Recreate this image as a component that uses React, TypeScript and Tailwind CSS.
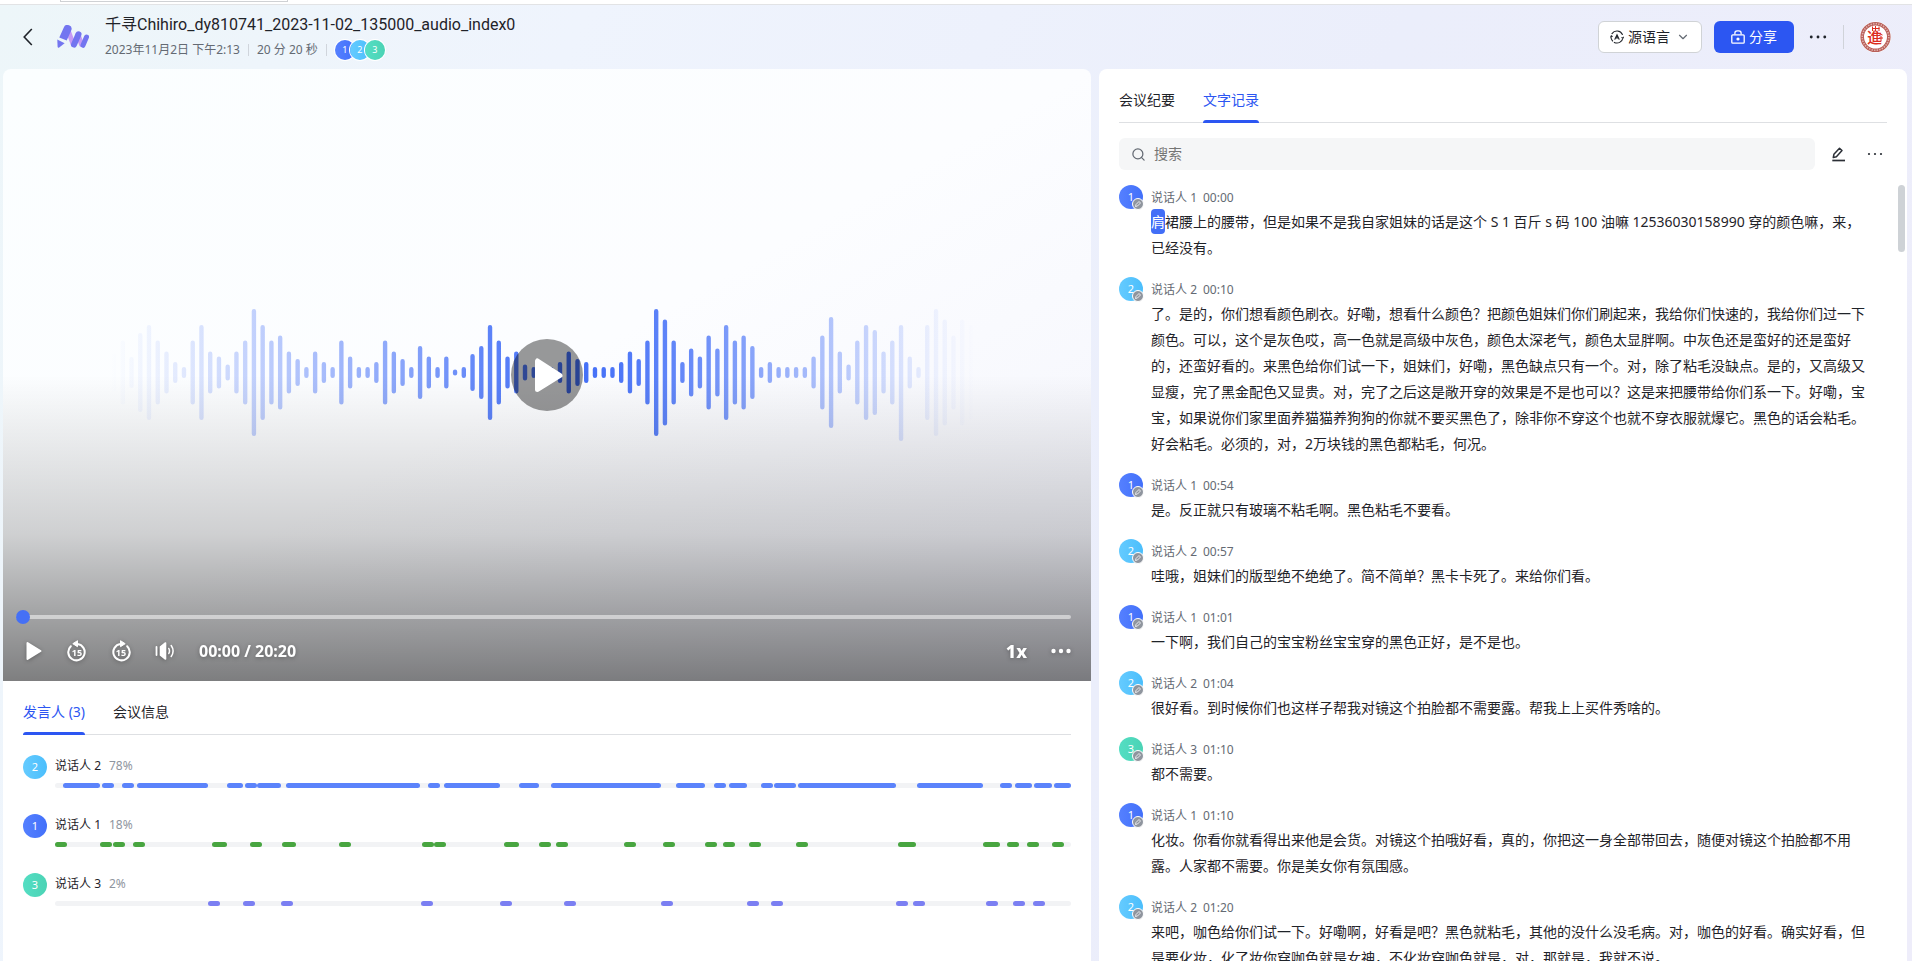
import React, { useState } from "react";
import { ChevronDown, Search } from "lucide-react";
import { clsx } from "clsx";

type SpeakerId = 1 | 2 | 3;

interface Entry {
  speaker: SpeakerId;
  time: string;
  text: string;
}

interface Speaker {
  id: SpeakerId;
  share: string;
  bar: string;
  segments: number[][];
}

const AVATAR: Record<SpeakerId, string> = {
  1: "bg-linear-to-r from-[#5580ff] to-[#4270fa]",
  2: "bg-linear-to-r from-[#65cbff] to-[#4abefc]",
  3: "bg-linear-to-r from-[#54dec3] to-[#4bd3b5]",
};

const ENTRIES: Entry[] = [
  { speaker: 1, time: "00:00", text: "肩裙腰上的腰带，但是如果不是我自家姐妹的话是这个 S 1 百斤 s 码 100 油嘛 12536030158990 穿的颜色嘛，来，已经没有。" },
  { speaker: 2, time: "00:10", text: "了。是的，你们想看颜色刷衣。好嘞，想看什么颜色？把颜色姐妹们你们刷起来，我给你们快速的，我给你们过一下颜色。可以，这个是灰色哎，高一色就是高级中灰色，颜色太深老气，颜色太显胖啊。中灰色还是蛮好的还是蛮好的，还蛮好看的。来黑色给你们试一下，姐妹们，好嘞，黑色缺点只有一个。对，除了粘毛没缺点。是的，又高级又显瘦，完了黑金配色又显贵。对，完了之后这是敞开穿的效果是不是也可以？这是来把腰带给你们系一下。好嘞，宝宝，如果说你们家里面养猫猫养狗狗的你就不要买黑色了，除非你不穿这个也就不穿衣服就爆它。黑色的话会粘毛。好会粘毛。必须的，对，2万块钱的黑色都粘毛，何况。" },
  { speaker: 1, time: "00:54", text: "是。反正就只有玻璃不粘毛啊。黑色粘毛不要看。" },
  { speaker: 2, time: "00:57", text: "哇哦，姐妹们的版型绝不绝绝了。简不简单？黑卡卡死了。来给你们看。" },
  { speaker: 1, time: "01:01", text: "一下啊，我们自己的宝宝粉丝宝宝穿的黑色正好，是不是也。" },
  { speaker: 2, time: "01:04", text: "很好看。到时候你们也这样子帮我对镜这个拍脸都不需要露。帮我上上买件秀啥的。" },
  { speaker: 3, time: "01:10", text: "都不需要。" },
  { speaker: 1, time: "01:10", text: "化妆。你看你就看得出来他是会货。对镜这个拍哦好看，真的，你把这一身全部带回去，随便对镜这个拍脸都不用露。人家都不需要。你是美女你有氛围感。" },
  { speaker: 2, time: "01:20", text: "来吧，咖色给你们试一下。好嘞啊，好看是吧？黑色就粘毛，其他的没什么没毛病。对，咖色的好看。确实好看，但是要化妆，化了妆你穿咖色就是女神，不化妆穿咖色就是，对，那就是，我就不说。" },
];

// segment positions are in units of 1/1016 of the timeline
const TIMELINE = 1016;

const SPEAKERS: Speaker[] = [
  {
    id: 2,
    share: "78%",
    bar: "bg-[#5b83fb]",
    segments: [[8, 45], [47, 59], [67, 79], [82, 153], [172, 188], [190, 202], [202, 226], [231, 365], [373, 385], [389, 445], [464, 484], [496, 606], [621, 650], [659, 671], [674, 692], [706, 718], [719, 741], [743, 841], [862, 928], [945, 957], [960, 977], [979, 997], [999, 1016]],
  },
  {
    id: 1,
    share: "18%",
    bar: "bg-[#48a540]",
    segments: [[0, 12], [45, 57], [58, 70], [78, 90], [157, 172], [195, 207], [227, 241], [284, 296], [367, 379], [379, 391], [449, 464], [484, 496], [501, 513], [569, 581], [608, 620], [650, 662], [668, 680], [694, 706], [741, 753], [843, 861], [928, 945], [952, 964], [972, 984], [997, 1009]],
  },
  {
    id: 3,
    share: "2%",
    bar: "bg-[#7b7ff2]",
    segments: [[153, 165], [188, 200], [226, 238], [366, 378], [445, 457], [509, 521], [606, 618], [692, 704], [716, 728], [841, 853], [858, 870], [931, 943], [958, 970], [978, 990]],
  },
];

const WAVE = [
  38, 64, 31, 79, 95, 64, 42, 21, 11, 64, 95, 42, 32, 16, 42, 64, 127, 95, 64, 74, 42, 27, 11, 42, 21,
  11, 64, 32, 11, 11, 21, 64, 42, 27, 11, 53, 32, 11, 32, 6, 11, 37, 53, 95, 64, 32, 42, 16, 11, 6,
  11, 21, 42, 27, 21, 11, 11, 11, 21, 42, 27, 64, 127, 106, 64, 21, 48, 32, 74, 48, 95, 64, 74, 53, 11,
  21, 11, 11, 11, 11, 32, 74, 111, 42, 16, 64, 95, 85, 42, 64, 116, 32, 11, 95, 127, 106, 74, 106, 95,
];

// the 116 bar hangs lower than the rest
const WAVE_PATH = WAVE.map((h, i) => {
  const x = 111 + i * 8.745;
  const mid = h === 116 ? 314 : 303.5;
  const half = Math.max(h / 2 - 2.2, 0.2);
  return `M${x.toFixed(2)} ${mid - half}V${mid + half}`;
}).join("");

const WAVE_STOPS = [
  [0, 0], [0.05, 0.08], [0.1, 0.18], [0.17, 0.32], [0.27, 0.5], [0.35, 0.64], [0.44, 0.86], [0.53, 1],
  [0.58, 0.95], [0.66, 0.82], [0.73, 0.65], [0.79, 0.5], [0.85, 0.35], [0.91, 0.19], [0.95, 0.08], [1, 0],
];

function Waveform() {
  return (
    <svg viewBox="0 0 1088 612" className="absolute inset-0 w-full h-full" aria-hidden="true">
      <defs>
        <linearGradient id="wave" gradientUnits="userSpaceOnUse" x1="108" y1="0" x2="972" y2="0">
          {WAVE_STOPS.map(([offset, opacity]) => (
            <stop key={offset} offset={offset} stopColor="#426ef7" stopOpacity={opacity} />
          ))}
        </linearGradient>
      </defs>
      <path d={WAVE_PATH} stroke="url(#wave)" strokeWidth="4.4" strokeLinecap="round" fill="none" />
    </svg>
  );
}

function Dots({ className, r = 1.6 }: { className?: string; r?: number }) {
  return (
    <svg viewBox="0 0 20 20" className={className} fill="currentColor" aria-hidden="true">
      <circle cx="2.5" cy="10" r={r} />
      <circle cx="10" cy="10" r={r} />
      <circle cx="17.5" cy="10" r={r} />
    </svg>
  );
}

function Logo() {
  return (
    <svg viewBox="0 0 32 24" className="w-8 h-6 shrink-0" aria-hidden="true">
      <path d="M11 5L16 19M21 9.500L24.500 19.500" stroke="#c79bf5" strokeWidth="5" strokeLinecap="round" />
      <path d="M2.300 12.400L6.800 2.400A4 4 0 0 1 14.200 5.600L9.700 15.600Z" fill="#7375f0" />
      <path d="M.3 14.500L7.600 18.300L2.200 22.600Q.8 23.400.6 21.800Z" fill="#7375f0" />
      <path d="M21.500 9.300L17 19.600" stroke="#7375f0" strokeWidth="6" strokeLinecap="round" />
      <path d="M29.500 12L26 20.300" stroke="#7375f0" strokeWidth="5" strokeLinecap="round" />
    </svg>
  );
}

function LanguageIcon() {
  return (
    <svg viewBox="0 0 14 14" className="w-[14px] h-[14px]" fill="none" stroke="currentColor" strokeWidth="1.100" strokeLinecap="round" aria-hidden="true">
      <path d="M2 3.600A6 6 0 0 1 12.400 4.500M1 6.200a6 6 0 0 0 1.600 4.800M4.300 12.400A6 6 0 0 0 12.900 8M.7 6.900L1.300 5.800L2.200 6.500M13.400 7.200L12.800 8.300L11.900 7.600" />
      <path d="M4.900 9.300L7 4.700L9.100 9.300M5.700 7.900H8.300" />
    </svg>
  );
}

function ShareIcon() {
  return (
    <svg viewBox="0 0 14 14" className="w-[14px] h-[14px]" fill="none" stroke="currentColor" strokeWidth="1.300" aria-hidden="true">
      <rect x=".8" y="4.800" width="12.400" height="8.400" rx="1" />
      <path d="M3.900 4.600V3A2.200 2.200 0 0 1 6.100.8H7.900A2.200 2.200 0 0 1 10.100 3V4.600" />
      <circle cx="7" cy="9" r="1.600" fill="currentColor" stroke="none" />
    </svg>
  );
}

function Seal() {
  return (
    <svg viewBox="0 0 32 32" className="w-8 h-8" aria-hidden="true">
      <circle cx="15.500" cy="16" r="15.500" fill="#fff" />
      <circle cx="15.500" cy="16" r="13.300" fill="none" stroke="#b9605a" strokeWidth="3.600" />
      <circle cx="15.500" cy="16" r="13.300" fill="none" stroke="#e0b3ae" strokeWidth="1.600" strokeDasharray="1.4 1.2" />
      <text x="14.500" y="22" textAnchor="middle" fontSize="15" fontWeight="500" fill="#dc2c1e">進</text>
      <path d="M12 7.500H19.500M12.500 5.500V10M15.500 5V10.500M19 5.500V10M18.500 12.500L22.500 14M19 17H23M21 15V20" fill="none" stroke="#dc2c1e" />
    </svg>
  );
}

function SkipIcon({ forward }: { forward?: boolean }) {
  return (
    <svg viewBox="0 0 20 22" className="w-5 h-[22px]" aria-hidden="true">
      <g transform={forward ? "matrix(-1 0 0 1 20 0)" : undefined}>
        <path d="M3.800 6.200A8.200 8.200 0 1 0 10.500 4" fill="none" stroke="#fff" strokeWidth="2" strokeLinecap="round" />
        <path d="M5.800 3.700L10.500 .7V6.700Z" fill="#fff" stroke="#fff" strokeLinejoin="round" />
      </g>
      <text x="10" y="15.500" textAnchor="middle" fontSize="9" fontWeight="700" fill="#fff">15</text>
    </svg>
  );
}

function VolumeIcon() {
  return (
    <svg viewBox="0 0 20 20" className="w-5 h-5" fill="none" stroke="#fff" strokeLinecap="round" aria-hidden="true">
      <path d="M1.500 6V14" strokeWidth="1.800" />
      <path d="M5.500 5.800L10.500 2V18L5.500 14.200Z" fill="#fff" strokeWidth="1.600" strokeLinejoin="round" />
      <path d="M13.800 7.500Q15.200 10 13.800 12.500M16.200 4.500Q20 10 16.200 15.500" strokeWidth="1.500" />
    </svg>
  );
}

function Tab({ active, children, onClick }: { active: boolean; children: React.ReactNode; onClick: () => void }) {
  return (
    <button
      type="button"
      role="tab"
      aria-selected={active}
      onClick={onClick}
      className={clsx("relative h-full text-sm cursor-pointer", active ? "text-[#2c56f2]" : "text-[#1f2329]")}
    >
      {children}
      {active && <span className="absolute inset-x-0 -bottom-px h-[3px] rounded-t-sm bg-[#2c56f2]" />}
    </button>
  );
}

function EditBadge() {
  return (
    <span className="absolute -right-px -bottom-px flex items-center justify-center w-3 h-3 rounded-full border border-white bg-[#8f959e]">
      <svg viewBox="0 0 8 8" className="w-2 h-2" fill="none" stroke="#fff" strokeWidth=".8" aria-hidden="true">
        <path d="M1.500 6.500L2 4.500L5 1.500L6.500 3L3.500 6Z" />
      </svg>
    </span>
  );
}

function Header() {
  return (
    <header className="flex items-center justify-between h-16 shrink-0 px-5">
      <div className="flex items-center">
        <button type="button" aria-label="返回" className="w-4 h-6 flex items-center justify-center text-[#1f2329]">
          <svg viewBox="0 0 10 18" className="w-[10px] h-[18px]" fill="none" stroke="currentColor" strokeWidth="1.600" aria-hidden="true">
            <path d="M8.800 1L1.200 9L8.800 17" />
          </svg>
        </button>
        <div className="ml-[21px] mr-4">
          <Logo />
        </div>
        <div className="flex flex-col pt-0.5">
          <h1 className="font-['Roboto','Noto_Sans_CJK_SC',sans-serif] text-base leading-6 text-[#1f2329]">千寻Chihiro_dy810741_2023-11-02_135000_audio_index0</h1>
          <div className="flex items-center h-[26px] text-xs text-[#646a73]">
            <span>2023年11月2日 下午2:13</span>
            <span className="w-px h-3 mx-2 bg-[#d0d5dc]" />
            <span>20 分 20 秒</span>
            <span className="w-px h-3 mx-2 bg-[#d0d5dc]" />
            <div className="flex -space-x-[5px]">
              {([1, 2, 3] as SpeakerId[]).map((id) => (
                <span key={id} className={clsx("flex items-center justify-center w-5 h-5 rounded-full text-[9px] text-white shadow-[0_0_0_1px_#fff]", AVATAR[id])}>
                  {id}
                </span>
              ))}
            </div>
          </div>
        </div>
      </div>

      <div className="flex items-center">
        <button type="button" className="flex items-center gap-1 w-[104px] h-8 px-[11px] rounded-md border border-[#d0d3d6] bg-white text-sm text-[#1f2329]">
          <LanguageIcon />
          <span>源语言</span>
          <ChevronDown className="w-[14px] h-[14px] ml-auto text-[#646a73]" />
        </button>
        <button type="button" className="flex items-center justify-center gap-1 w-20 h-8 ml-3 rounded-md bg-[#2c56f2] text-sm text-white">
          <ShareIcon />
          <span>分享</span>
        </button>
        <button type="button" aria-label="更多" className="ml-[15px] text-[#1f2329]">
          <Dots className="w-[18px] h-[18px]" />
        </button>
        <span className="w-px h-6 mx-4 bg-[#d0d3d9]" />
        <Seal />
      </div>
    </header>
  );
}

function Player() {
  const [position, setPosition] = useState(0);

  return (
    <div className="relative aspect-video shrink-0 overflow-hidden rounded-tl-lg rounded-tr-lg bg-linear-to-br from-[#fbfeff] via-[#fcfdff] to-[#f3f4fc]">
      <Waveform />
      <div className="absolute inset-0 bg-linear-to-b from-transparent from-50% via-black/18 via-76% to-black/50" />
      <button type="button" aria-label="播放" className="absolute inset-0 m-auto flex items-center justify-center w-[72px] h-[72px] rounded-full bg-black/40">
        <svg viewBox="0 0 72 72" className="w-full h-full" aria-hidden="true">
          <path d="M26.500 22V50.500L49 36.500Z" fill="#fff" stroke="#fff" strokeWidth="5" strokeLinejoin="round" />
        </svg>
      </button>
      <div className="absolute inset-x-0 bottom-0 pl-[13px] pr-5 pb-[18px] text-white">
        <input
          type="range"
          aria-label="播放进度"
          min={0}
          max={1220}
          value={position}
          onChange={(e) => setPosition(Number(e.target.value))}
          className="block w-full h-[14px] mb-[15px] appearance-none bg-transparent [&::-webkit-slider-runnable-track]:h-1 [&::-webkit-slider-runnable-track]:rounded-full [&::-webkit-slider-runnable-track]:bg-white/50 [&::-webkit-slider-thumb]:appearance-none [&::-webkit-slider-thumb]:w-[14px] [&::-webkit-slider-thumb]:h-[14px] [&::-webkit-slider-thumb]:-mt-[5px] [&::-webkit-slider-thumb]:rounded-full [&::-webkit-slider-thumb]:bg-[#4570f5]"
        />
        <div className="flex items-center h-6 pl-[7px] drop-shadow-[0_1px_2px_rgba(0,0,0,0.3)]">
          <button type="button" aria-label="播放" className="w-5 h-5">
            <svg viewBox="0 0 20 20" className="w-5 h-5" aria-hidden="true">
              <path d="M4.500 2V18L17.500 10Z" fill="#fff" stroke="#fff" strokeWidth="2" strokeLinejoin="round" />
            </svg>
          </button>
          <button type="button" aria-label="后退 15 秒" className="ml-6">
            <SkipIcon />
          </button>
          <button type="button" aria-label="前进 15 秒" className="ml-6">
            <SkipIcon forward />
          </button>
          <button type="button" aria-label="音量" className="ml-6">
            <VolumeIcon />
          </button>
          <span className="ml-6 text-base font-bold">00:00 / 20:20</span>
          <button type="button" className="ml-auto text-lg font-extrabold">1x</button>
          <button type="button" aria-label="更多" className="ml-6">
            <Dots className="w-5 h-5" r={2.2} />
          </button>
        </div>
      </div>
    </div>
  );
}

function SpeakerPanel() {
  const [tab, setTab] = useState("speakers");

  return (
    <section className="flex-1 px-5 bg-white">
      <div role="tablist" className="flex gap-7 h-[54px] pt-2 border-b border-[#dee0e3]">
        <Tab active={tab === "speakers"} onClick={() => setTab("speakers")}>发言人 (3)</Tab>
        <Tab active={tab === "info"} onClick={() => setTab("info")}>会议信息</Tab>
      </div>
      <ul className="flex flex-col gap-[26px] pt-5">
        {SPEAKERS.map((s) => (
          <li key={s.id} className="flex gap-2 h-[33px]">
            <span className={clsx("flex items-center justify-center w-6 h-6 shrink-0 rounded-full text-[11px] text-white", AVATAR[s.id])}>
              {s.id}
            </span>
            <div className="flex-1">
              <div className="flex items-center gap-2 h-[21px] mb-[7px] text-xs text-[#1f2329]">
                <span>说话人 {s.id}</span>
                <span className="text-[#8f959e]">{s.share}</span>
              </div>
              <div className="relative h-[5px] rounded-full bg-[#f2f3f5]">
                {s.segments.map(([start, end]) => (
                  <span
                    key={start}
                    className={clsx("absolute inset-y-0 rounded-full", s.bar)}
                    style={{ left: `${(start / TIMELINE) * 100}%`, width: `${((end - start) / TIMELINE) * 100}%` }}
                  />
                ))}
              </div>
            </div>
          </li>
        ))}
      </ul>
    </section>
  );
}

function TranscriptPanel() {
  const [tab, setTab] = useState("transcript");

  return (
    <section className="relative flex flex-col min-h-0 pl-5 rounded-t-lg bg-white">
      <div role="tablist" className="flex gap-7 h-[54px] shrink-0 mr-5 pt-2 border-b border-[#dee0e3]">
        <Tab active={tab === "summary"} onClick={() => setTab("summary")}>会议纪要</Tab>
        <Tab active={tab === "transcript"} onClick={() => setTab("transcript")}>文字记录</Tab>
      </div>
      <div className="flex items-center shrink-0 mt-[15px] mr-6">
        <label className="flex flex-1 items-center gap-2 h-8 px-3 rounded-md bg-[#f5f6f7]">
          <Search className="w-[15px] h-[15px] text-[#646a73]" />
          <input type="text" aria-label="搜索" placeholder="搜索" className="flex-1 bg-transparent text-sm outline-none placeholder:text-[#757575]" />
        </label>
        <button type="button" aria-label="编辑" className="ml-4 text-[#2b2f36]">
          <svg viewBox="0 0 16 16" className="w-4 h-4" fill="none" stroke="currentColor" strokeWidth="1.500" strokeLinejoin="round" aria-hidden="true">
            <path d="M2.300 11.500L2.900 8.300L8.500 2.300L11 4.600L5.400 10.800Z" />
            <path d="M1.300 14.500H14" strokeWidth="1.700" />
          </svg>
        </button>
        <button type="button" aria-label="更多" className="ml-5 text-[#2b2f36]">
          <Dots className="w-4 h-4" r={1.4} />
        </button>
      </div>

      <div className="flex-1 min-h-0 mt-[15px] overflow-hidden pr-10">
        {ENTRIES.map((entry, i) => (
          <article key={i} className="flex gap-2 mb-4">
            <span className={clsx("relative flex items-center justify-center w-6 h-6 shrink-0 rounded-full text-[11px] text-white", AVATAR[entry.speaker])}>
              {entry.speaker}
              <EditBadge />
            </span>
            <div className="flex-1">
              <div className="flex items-center gap-[6px] h-6 pt-0.5 text-xs text-[#646a73]">
                <span>说话人 {entry.speaker}</span>
                <time>{entry.time}</time>
              </div>
              <p className="text-sm leading-[26px] text-[#1f2329]">
                {i === 0 ? (
                  <>
                    <mark className="py-[3px] rounded bg-[#426ef7] text-white">{entry.text[0]}</mark>
                    {entry.text.slice(1)}
                  </>
                ) : (
                  entry.text
                )}
              </p>
            </div>
          </article>
        ))}
      </div>
      <span className="absolute right-[2px] top-[116px] w-[7px] h-[67px] rounded-full bg-[#ced2d6]" />
    </section>
  );
}

export default function App() {
  return (
    <div className="flex flex-col h-screen overflow-hidden font-['Noto_Sans','Noto_Sans_CJK_SC',sans-serif] bg-[linear-gradient(115deg,#edf6f9_0%,#eff4fd_25%,#ebeefb_60%,#eeedfa_100%)]">
      <div className="h-[5px] shrink-0 pl-[60px] border-b border-[#e2e3e5] bg-white">
        <div className="w-[228px] h-[2px] border-x border-b border-[#cfd1d4]" />
      </div>
      <Header />
      <main className="grid grid-cols-[1088fr_808fr] grid-rows-[minmax(0,1fr)] gap-2 flex-1 min-h-0 pl-[3px] pr-[5px]">
        <div className="flex flex-col min-h-0">
          <Player />
          <SpeakerPanel />
        </div>
        <TranscriptPanel />
      </main>
    </div>
  );
}
